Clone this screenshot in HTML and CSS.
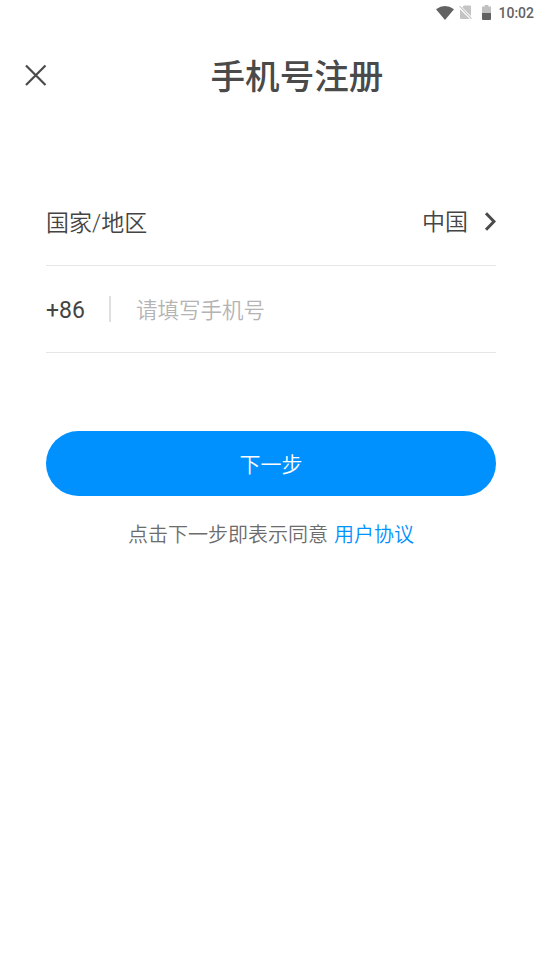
FILE: index.html
```html
<!DOCTYPE html>
<html lang="zh-CN">
<head>
<meta charset="utf-8">
<title>手机号注册</title>
<link rel="stylesheet" href="styles.css">
</head>
<body>
<div class="status">
  <svg class="wifi" width="18" height="14" viewBox="0 0 18 14"><path d="M0 3.2Q9-3.2 18 3.2L9 14Z" fill="#626262"/></svg>
  <svg class="sim" width="13" height="15" viewBox="0 0 13 15"><path d="M5 .5H11Q12 .5 12 1.5V11L3.2 2.2ZM1 4.2L10.8 14H2Q1 14 1 13Z" fill="#c4c4c4"/><path d="M.5 1.2L12.5 13.6" stroke="#c4c4c4" stroke-width="1.1"/></svg>
  <svg class="battery" width="9" height="15" viewBox="0 0 9 15"><path d="M2.7 0H6.3V1.5H9V8H0V1.5H2.7Z" fill="#c0c0c0"/><path d="M0 8H9V14Q9 15 8 15H1Q0 15 0 14Z" fill="#626262"/></svg>
  <span class="time">10:02</span>
</div>
<header class="header">
  <svg class="close" width="22" height="22" viewBox="0 0 22 22"><path d="M1 1.5L20.5 21M20.5 1.5L1 21" stroke="#4a4a4a" stroke-width="2.2" fill="none"/></svg>
  <h1 class="title">手机号注册</h1>
</header>
<main class="form">
  <div class="row region"><span class="label">国家/地区</span><span class="country">中国</span>
    <svg class="chevron" width="12" height="20" viewBox="0 0 12 20"><path d="M2 2.2L10 10.5L2 18.8" stroke="#4a4a4a" stroke-width="3" fill="none"/></svg>
  </div>
  <div class="row phone"><span class="code">+86</span><span class="divider"></span><span class="placeholder">请填写手机号</span></div>
  <button class="next">下一步</button>
  <p class="terms"><span>点击下一步即表示同意</span><a class="link">用户协议</a></p>
</main>
</body>
</html>
```
FILE: styles.css
```css
* { box-sizing: border-box; }
body { margin: 0; height: 963px; background: #fff; color: #444; font-family: Roboto, "Noto Sans CJK SC", sans-serif; overflow: hidden; }
svg { display: block; flex: none; }
.status { height: 25px; display: flex; align-items: center; justify-content: flex-end; padding-right: 8px; color: #626262; }
.wifi { margin-right: -1px; }
.sim { margin-left: 6px; }
.battery { margin-left: 10px; }
.time { margin-left: 7px; font-size: 14px; font-weight: 500; }
.header { height: 100px; display: grid; grid-template-columns: 22px 1fr; align-items: center; padding: 0 25px; }
.title { margin: 0; font-size: 34.6px; line-height: 50px; font-weight: 500; text-align: center; padding: 4px 0 0 30px; color: #4a4a4a; }
.form { padding: 53px 46px 0; }
.row { display: flex; align-items: center; border-bottom: 1px solid #e6e6e6; font-size: 23px; }
.region { height: 88px; }
.label, .country, .placeholder { font-weight: 350; padding-bottom: 2px; }
.phone { height: 87px; }
.code { padding-top: 2px; }
.country { margin-left: auto; padding-bottom: 3px; }
.chevron { margin-left: 16px; margin-bottom: 1px; }
.divider { width: 2px; height: 26px; background: #dfdfdf; margin: 0 25px 0 24px; }
.placeholder { color: #b4b4b4; font-size: 21.5px; }
.next { display: block; width: 100%; height: 65px; margin-top: 78px; padding: 0 0 2px; border: 0; border-radius: 33px; background: #0091ff; color: #fff; font: 350 21px Roboto, "Noto Sans CJK SC", sans-serif; }
.terms { display: flex; justify-content: center; margin: 24px 0 0; font-size: 20px; line-height: 30px; font-weight: 350; color: #6c6c6c; }
.link { color: #0091ff; margin-left: 6px; }
```
